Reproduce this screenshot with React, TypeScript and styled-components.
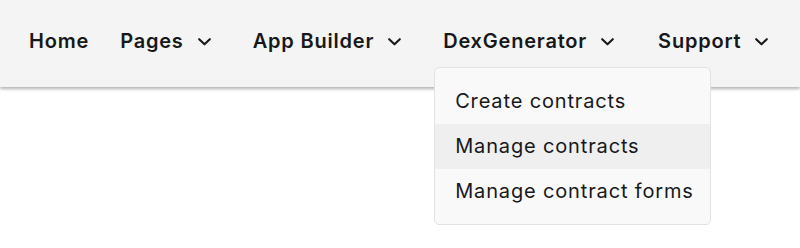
import React from "react";
import styled, { createGlobalStyle } from "styled-components";

const Global = createGlobalStyle`
  html, body { margin: 0; padding: 0; background: #ffffff; }
  body { font-family: Inter, "Noto Sans", sans-serif; color: #17181a; }
`;

const Page = styled.div`
  width: 800px;
  height: 248px;
  position: relative;
  overflow: hidden;
  background: #ffffff;
`;

const NavBar = styled.nav`
  height: 87px;
  background: #f4f4f4;
  box-shadow: 0 2px 3px rgba(0, 0, 0, 0.3);
  display: flex;
  align-items: center;
  padding: 0 0 6px 29px;
  box-sizing: border-box;
`;

const NavItem = styled.div<{ $gap: number }>`
  position: relative;
  display: flex;
  align-items: center;
  margin-right: ${(p) => p.$gap}px;
  font-size: 20px;
  font-weight: 600;
  letter-spacing: 0.8px;
  color: #17181a;
  cursor: pointer;
`;

const Chevron = styled.svg`
  width: 13px;
  height: 8px;
  margin-left: 14px;
  margin-top: 2px;
`;

const Menu = styled.ul`
  position: absolute;
  top: 38px;
  left: -9px;
  width: 277px;
  box-sizing: border-box;
  margin: 0;
  padding: 11px 0 10px;
  list-style: none;
  background: #f9f9f9;
  border: 1px solid #e2e2e2;
  border-radius: 5px;
  z-index: 2;
  cursor: default;
`;

const MenuItem = styled.li<{ $active?: boolean }>`
  height: 45px;
  display: flex;
  align-items: center;
  padding-left: 20px;
  font-size: 20px;
  font-weight: 400;
  letter-spacing: 0.85px;
  color: #17181a;
  background: ${(p) => (p.$active ? "#efefef" : "transparent")};
`;

const Down = () => (
  <Chevron viewBox="0 0 13 8" fill="none">
    <path d="M1.2 1.2 L6.5 6.3 L11.8 1.2" stroke="#17181a" strokeWidth="2.1" strokeLinecap="round" strokeLinejoin="round" />
  </Chevron>
);

export default function App() {
  return (
    <Page>
      <Global />
      <NavBar>
        <NavItem $gap={31}>Home</NavItem>
        <NavItem $gap={42}>
          Pages
          <Down />
        </NavItem>
        <NavItem $gap={42}>
          App Builder
          <Down />
        </NavItem>
        <NavItem $gap={44}>
          DexGenerator
          <Down />
          <Menu>
            <MenuItem>Create contracts</MenuItem>
            <MenuItem $active>Manage contracts</MenuItem>
            <MenuItem>Manage contract forms</MenuItem>
          </Menu>
        </NavItem>
        <NavItem $gap={0}>
          Support
          <Down />
        </NavItem>
      </NavBar>
    </Page>
  );
}
